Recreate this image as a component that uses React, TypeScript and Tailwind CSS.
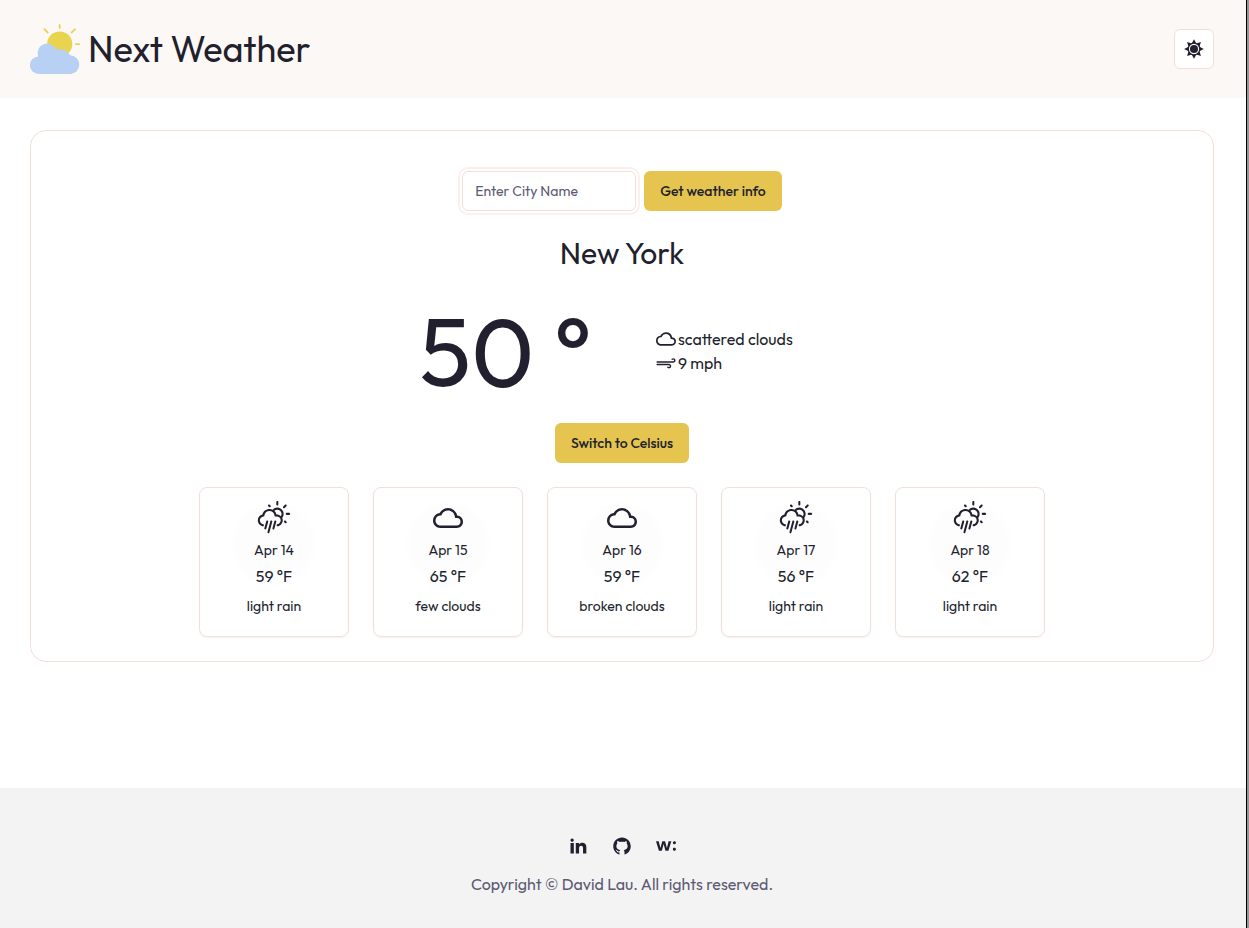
import React from "react";
import type { IconType } from "react-icons";
import { AiFillGithub } from "react-icons/ai";
import { MdOutlineCloud } from "react-icons/md";
import { RiLinkedinFill } from "react-icons/ri";
import { SiWellfound } from "react-icons/si";
import { WiDayRain, WiStrongWind } from "react-icons/wi";

type Forecast = { date: string; temp: string; text: string; rain: boolean };

const forecasts: Forecast[] = [
  { date: "Apr 14", temp: "59 °F", text: "light rain", rain: true },
  { date: "Apr 15", temp: "65 °F", text: "few clouds", rain: false },
  { date: "Apr 16", temp: "59 °F", text: "broken clouds", rain: false },
  { date: "Apr 17", temp: "56 °F", text: "light rain", rain: true },
  { date: "Apr 18", temp: "62 °F", text: "light rain", rain: true },
];

const links: { label: string; Icon: IconType }[] = [
  { label: "LinkedIn", Icon: RiLinkedinFill },
  { label: "GitHub", Icon: AiFillGithub },
  { label: "Wellfound", Icon: SiWellfound },
];

function Logo() {
  return (
    <svg viewBox="0 0 50 50" className="size-[50px]" aria-hidden="true">
      <circle cx="29.7" cy="20" r="12.6" fill="#e9d44f" />
      <g stroke="#e9d44f" strokeWidth="1.8" strokeLinecap="round">
        <path d="M29.7 0.9V4M45 5.2L41.6 8.6M45.8 20.2H49.1M14.4 5.2L17.8 8.6" />
      </g>
      <g fill="#b7d0f3">
        <circle cx="17.2" cy="29" r="9.6" />
        <circle cx="30" cy="36.5" r="11.2" />
        <circle cx="8.6" cy="41.2" r="8.7" />
        <circle cx="40" cy="40.6" r="9.3" />
        <path d="M8 32.6L10 30H25L42 36V49.9H8.6Z" />
      </g>
    </svg>
  );
}

function SunIcon() {
  return (
    <svg viewBox="0 0 20 20" className="size-5" fill="currentColor" aria-hidden="true">
      {[0, 45, 90, 135, 180, 225, 270, 315].map((a) => (
        <path key={a} d="M10 0.2L12.3 4.6H7.7Z" transform={`rotate(${a} 10 10)`} />
      ))}
      <circle cx="10" cy="10" r="5.8" fill="none" stroke="currentColor" strokeWidth="1.3" />
      <circle cx="10" cy="10" r="4" />
    </svg>
  );
}

function YellowButton({ children }: { children: React.ReactNode }) {
  return (
    <button type="button" className="h-10 rounded-md bg-[#e5c44f] px-4 text-sm font-medium">
      {children}
    </button>
  );
}

export default function App() {
  return (
    <div className="flex min-h-screen bg-white font-['Outfit','Lato',sans-serif] text-[#221f2e]">
      <div className="flex min-w-0 flex-1 flex-col">
        <header className="flex items-center justify-between bg-[#fcf8f5] py-6 pr-8 pl-[30px]">
          <div className="flex items-center gap-2">
            <Logo />
            <h1 className="text-4xl">Next Weather</h1>
          </div>
          <button
            type="button"
            aria-label="Toggle theme"
            className="flex size-10 items-center justify-center rounded-md border border-[#f2dfd9] bg-white"
          >
            <SunIcon />
          </button>
        </header>

        <main className="pt-8 pr-8 pb-8 pl-[30px]">
          <section className="flex flex-col items-center rounded-2xl border border-[#f2dfd9] px-6 pt-10 pb-6">
            <form className="flex gap-2" onSubmit={(e) => e.preventDefault()}>
              <input
                type="text"
                aria-label="City name"
                placeholder="Enter City Name"
                className="h-10 w-[174px] rounded-md border border-[#f2dfd9] bg-white px-3 text-sm ring-2 ring-[#fbf0ec] ring-offset-2 outline-none placeholder:text-[#5d5a74]"
              />
              <YellowButton>Get weather info</YellowButton>
            </form>

            <h2 className="mt-6 text-3xl">New York</h2>

            <div className="mt-8 flex items-center gap-16 pr-8">
              <p className="text-8xl">50 °</p>
              <div>
                <p className="flex items-center gap-0.5">
                  <MdOutlineCloud size={20} />
                  scattered clouds
                </p>
                <p className="flex items-center gap-0.5">
                  <span className="flex w-5 justify-center">
                    <WiStrongWind size={24} className="shrink-0" />
                  </span>
                  9 mph
                </p>
              </div>
            </div>

            <div className="mt-6">
              <YellowButton>Switch to Celsius</YellowButton>
            </div>

            <ul className="mt-6 flex flex-wrap justify-center gap-6">
              {forecasts.map((f) => (
                <li
                  key={f.date}
                  className="flex size-[150px] flex-col items-center rounded-lg border border-[#f2dfd9] bg-[radial-gradient(circle_at_50%_38%,#fdfdfd_36px,#ffffff_45px)] pt-3 shadow-xs"
                >
                  <div className="flex h-9 items-center">
                    {f.rain ? <WiDayRain size={36} /> : <MdOutlineCloud size={30} />}
                  </div>
                  <p className="mt-1 text-sm">{f.date}</p>
                  <p className="mt-1 leading-6">{f.temp}</p>
                  <p className="mt-2 text-sm">{f.text}</p>
                </li>
              ))}
            </ul>
          </section>
        </main>

        <footer className="mt-auto flex flex-col items-center gap-4 bg-[#f3f3f3] pt-12 pr-8 pb-8 pl-[30px]">
          <nav className="flex gap-6">
            {links.map(({ label, Icon }) => (
              <a key={label} href="#" aria-label={label}>
                <Icon size={20} />
              </a>
            ))}
          </nav>
          <p className="text-[#5d5a74]">Copyright © David Lau. All rights reserved.</p>
        </footer>
      </div>
      <div className="w-[3px] border-l border-black bg-[#969696]" />
    </div>
  );
}
